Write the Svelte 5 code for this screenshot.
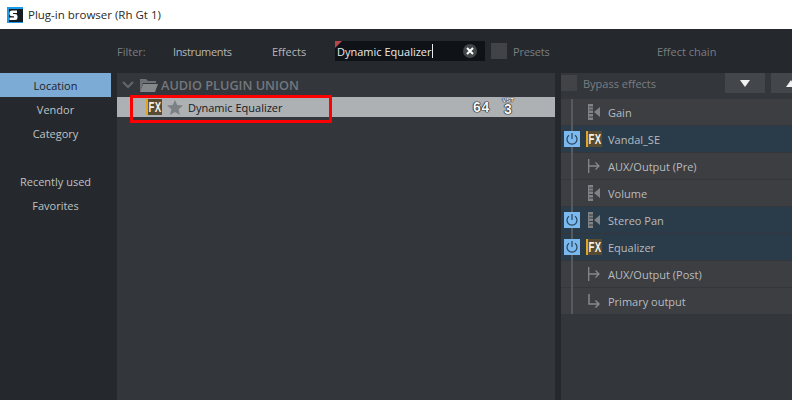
<script>
  const nav = [
    { label: 'Location', active: true },
    { label: 'Vendor' },
    { label: 'Category' },
    { label: 'Recently used', gap: true },
    { label: 'Favorites' },
  ];
  const chain = [
    { label: 'Gain', icon: 'meter', first: true },
    { label: 'Vandal_SE', icon: 'fx', on: true },
    { label: 'AUX/Output (Pre)', icon: 'aux' },
    { label: 'Volume', icon: 'meter' },
    { label: 'Stereo Pan', icon: 'meter', on: true },
    { label: 'Equalizer', icon: 'fx', on: true },
    { label: 'AUX/Output (Post)', icon: 'aux' },
    { label: 'Primary output', icon: 'out' },
  ];
</script>

{#snippet fx()}
  <span class="fx"><span>FX</span></span>
{/snippet}

<div class="app">
  <header class="titlebar">
    <svg class="logo" width="16" height="16" viewBox="0 0 16 16">
      <rect width="16" height="16" fill="#1d9be8" />
      <rect x="2" y="2" width="14" height="13" fill="#141c24" />
      <path d="M2.5 6 Q2.5 3.5 5 3.5 H10 V6 H6 V7 H8 Q10.5 7 10.5 9.2 V10.5 Q10.5 13 8 13 H2.5 V10.5 H7 V9.2 H5 Q2.5 9.2 2.5 7.2 Z" fill="#fff" />
    </svg>
    <span>Plug-in browser (Rh Gt 1)</span>
  </header>

  <div class="filterbar">
    <span class="dim filter-label">Filter:</span>
    <span class="tab instruments">Instruments</span>
    <span class="tab effects">Effects</span>
    <div class="search">
      <span class="corner"></span>
      <span class="query">Dynamic Equalizer</span><span class="caret"></span>
      <span class="clear">
        <svg width="8" height="8" viewBox="0 0 8 8"><path d="M1 1 L7 7 M7 1 L1 7" stroke="#fff" stroke-width="2" /></svg>
      </span>
    </div>
    <span class="check"></span>
    <span class="dim presets">Presets</span>
    <span class="dim chain-title">Effect chain</span>
  </div>

  <div class="body">
    <nav class="nav">
      {#each nav as item}
        <div class="nav-item" class:active={item.active} class:gap={item.gap}>{item.label}</div>
      {/each}
    </nav>

    <section class="list">
      <div class="folder">
        <svg width="12" height="8" viewBox="0 0 12 8"><path d="M1 1 L6 6 L11 1" fill="none" stroke="#63676b" stroke-width="2" /></svg>
        <svg class="folder-icon" width="19" height="16" viewBox="0 0 19 16">
          <path d="M1 15 V2 H7 L9 4 H17 V6 H4 Z" fill="#6d7074" />
          <path d="M1 15 L4 7 H19 L16 15 Z" fill="#85888b" />
        </svg>
        <span>AUDIO PLUGIN UNION</span>
      </div>
      <div class="plugin">
        {@render fx()}
        <svg class="star" width="16" height="15" viewBox="0 0 16 15"><path d="M8 0 L10.2 5 L16 5.6 L11.6 9.3 L13 15 L8 12 L3 15 L4.4 9.3 L0 5.6 L5.8 5 Z" fill="#7d8084" /></svg>
        <span class="plugin-name">Dynamic Equalizer</span>
        <span class="badge">64</span>
        <span class="vst"><small>VST</small><b>3</b></span>
      </div>
      <div class="highlight"></div>
    </section>

    <aside class="side">
      <div class="bypass">
        <span class="check"></span>
        <span class="dim bypass-label">Bypass effects</span>
        <button class="arrow down" aria-label="Move down"><i></i></button>
        <button class="arrow up" aria-label="Move up"><i></i></button>
      </div>
      <div class="chain">
        {#each chain as row}
          <div class="row" class:on={row.on}>
            <span class="power">
              {#if row.on}
                <svg width="14" height="14" viewBox="0 0 14 14" fill="none" stroke="#2b4459" stroke-width="1.2"><path d="M4 3.2 A5 5 0 1 0 10 3.2" /><path d="M7 1 V7" /></svg>
              {/if}
            </span>
            <span class="row-icon">
              {#if row.icon === 'fx'}
                {@render fx()}
              {:else if row.icon === 'meter'}
                <svg width="12" height="16" viewBox="0 0 12 16">
                  <path d="M0 0 H5 V16 H0 Z" fill="#7f8286" />
                  <path d="M1 3 H5 M1 6 H5 M1 9.5 H5 M1 13 H5" stroke="#3c3e42" />
                  <path d="M6 8 L12 3 V13 Z" fill="#7f8286" />
                </svg>
              {:else if row.icon === 'aux'}
                <svg width="12" height="14" viewBox="0 0 12 14" fill="none" stroke="#85888c" stroke-width="1.3"><path d="M.7 0 V14" /><path d="M1 7 H11 M7.5 3.5 L11 7 L7.5 10.5" /></svg>
              {:else}
                <svg width="12" height="14" viewBox="0 0 12 14" fill="none" stroke="#85888c" stroke-width="1.5"><path d="M1 0 V10 H11 M7.5 6.5 L11 10 L7.5 13.5" /></svg>
              {/if}
            </span>
            <span class="row-label">{row.label}</span>
          </div>
        {/each}
      </div>
    </aside>
  </div>
</div>

<style>
  :global(body) { margin: 0; background: #25282c; }
  .app { width: 792px; height: 400px; overflow: hidden; display: flex; flex-direction: column; background: #25282c; font-family: "Open Sans", "Noto Sans", sans-serif; font-size: 11px; color: #c4c7ca; }
  .titlebar { height: 29px; flex: none; display: flex; align-items: center; gap: 5px; padding-left: 7px; background: #fff; color: #2a2a2a; font-size: 11.5px; }
  .filterbar { height: 44px; flex: none; display: flex; align-items: center; }
  .dim { color: #7a7e82; }
  .filter-label { margin-left: 117px; width: 56px; }
  .tab { color: #b4b7ba; }
  .instruments { width: 99px; letter-spacing: -.35px; }
  .effects { width: 63px; }
  .search { position: relative; width: 150px; height: 20px; display: flex; align-items: center; background: #0f1217; color: #e8eaec; padding-left: 2px; box-sizing: border-box; font-size: 11px; }
  .corner { position: absolute; left: 0; top: 0; border-top: 7px solid #b5484a; border-right: 7px solid transparent; }
  .caret { width: 1px; height: 14px; background: #e8eaec; }
  .clear { position: absolute; left: 128px; top: 3px; width: 14px; height: 14px; border-radius: 50%; background: #43464a; display: flex; align-items: center; justify-content: center; }
  .check { display: block; width: 16px; height: 16px; background: #414346; flex: none; }
  .filterbar .check { margin-left: 6px; }
  .presets { margin-left: 6px; width: 144px; letter-spacing: -.2px; }

  .body { flex: 1; display: flex; min-height: 0; }
  .nav { width: 111px; flex: none; }
  .nav-item { height: 24px; display: flex; align-items: center; justify-content: center; color: #bfc2c5; }
  .nav-item.active { background: #7cacd6; color: #1c2126; }
  .nav-item.gap { margin-top: 24px; }

  .list { position: relative; width: 438px; flex: none; margin-left: 6px; background: #33363b; }
  .folder { height: 24px; display: flex; align-items: center; padding-left: 5px; color: #74787c; font-size: 12.7px; font-weight: 600; }
  .folder-icon { margin: 0 3px 0 5px; }
  .plugin { height: 20px; display: flex; align-items: center; padding-left: 29px; background: #aeb1b4; color: #16191c; }
  .fx { display: flex; align-items: center; justify-content: center; box-sizing: border-box; width: 16px; height: 16px; flex: none; background: #574b32; border-left: 2px solid #e0a526; color: #f4f0e6; font-family: "Liberation Sans", sans-serif; font-size: 12px; font-weight: 700; overflow: hidden; }
  .fx span { display: block; transform: scale(.8, 1.15); letter-spacing: .4px; }
  .star { margin: 0 5px 0 5px; }
  .plugin-name { width: 285px; }
  .badge, .vst b { color: #f8f8f8; font-weight: 700; font-family: "Liberation Sans", sans-serif; text-shadow: 0 0 1px #111, 0 0 1px #111, 0 0 1px #111, 0 0 1px #111; }
  .badge { font-size: 14px; letter-spacing: .6px; width: 27px; }
  .vst { position: relative; display: block; width: 16px; height: 20px; text-align: center; }
  .vst small { position: absolute; left: 0; top: 0; width: 16px; font-family: "Liberation Sans", sans-serif; font-size: 6px; line-height: 6px; font-weight: 700; color: #f4f4f4; text-shadow: 0 0 1px #222, 0 0 1px #222, 0 0 1px #222; }
  .vst b { position: absolute; left: 0; top: 6px; width: 16px; font-size: 14px; line-height: 13px; }
  .highlight { position: absolute; left: 13px; top: 22px; width: 202px; height: 28px; box-sizing: border-box; border: 3px solid #ff0000; }

  .side { position: relative; flex: 1; margin-left: 6px; background: #33363b; }
  .bypass { height: 26px; display: flex; align-items: flex-start; }
  .bypass .check { margin-top: 2px; }
  .bypass-label { margin: 3px 0 0 6px; width: 142px; }
  .arrow { width: 40px; height: 20px; padding: 0; border: 0; background: #43464a; display: flex; align-items: center; justify-content: center; flex: none; }
  .arrow.up { margin-left: 6px; }
  .arrow i { display: block; border-left: 5px solid transparent; border-right: 5px solid transparent; }
  .arrow.down i { border-top: 7px solid #f2f2f2; }
  .arrow.up i { border-bottom: 7px solid #f2f2f2; }
  .chain { position: relative; }
  .chain::before { content: ""; position: absolute; z-index: 1; left: 10px; top: 0; bottom: 0; width: 2px; background: #565a5e; }
  .row { height: 26px; margin-bottom: 1px; display: flex; align-items: center; background: #3c3e42; }
  .row.on { background: #2a3b4a; }
  .power { position: relative; z-index: 2; width: 16px; height: 16px; margin-left: 3px; flex: none; display: flex; align-items: center; justify-content: center; }
  .row.on .power { background: #7cb9ee; }
  .row-icon { width: 16px; height: 16px; margin-left: 6px; display: flex; align-items: center; justify-content: center; }
  .row-label { margin-left: 6px; color: #b8bcbf; }
</style>
